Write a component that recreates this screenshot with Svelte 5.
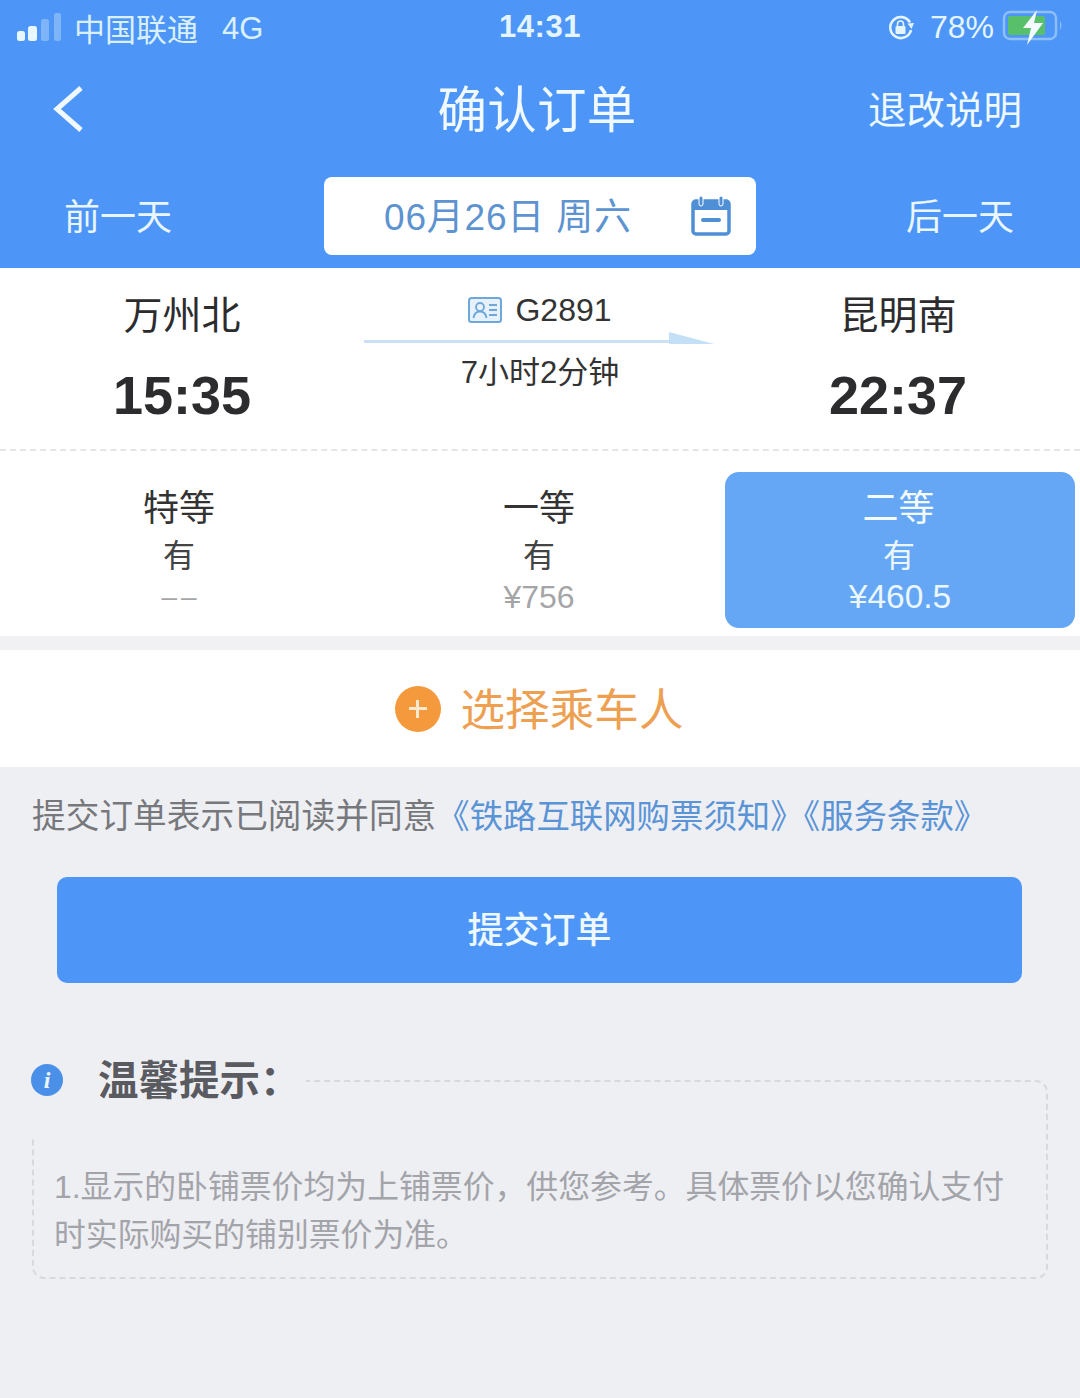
<script>
  const seats = [
    { name: '特等', left: '有', price: '––', empty: true },
    { name: '一等', left: '有', price: '¥756' },
    { name: '二等', left: '有', price: '¥460.5', active: true }
  ];
</script>

<div class="page">
  <header class="top">
    <div class="status">
      <div class="status-left">
        <svg class="signal" width="46" height="30" viewBox="0 0 46 30">
          <rect x="1" y="18" width="8" height="10" rx="2.5" fill="#e8f6ff" />
          <rect x="12" y="13" width="9" height="15" rx="2.5" fill="#e8f6ff" />
          <rect x="25" y="6" width="8" height="22" rx="2.5" fill="#7fb5f8" />
          <rect x="38" y="0" width="7" height="28" rx="2.5" fill="#7fb5f8" />
        </svg>
        <span class="carrier">中国联通</span>
        <span class="net">4G</span>
      </div>
      <span class="clock">14:31</span>
      <div class="status-right">
        <svg class="lock" width="30" height="30" viewBox="0 0 30 30">
          <path d="M24 9.5A10.5 10.5 0 1 0 25 17" fill="none" stroke="#e4f5ff" stroke-width="2.6" />
          <path d="M21.5 10.5 L28 10 L25.5 16 Z" fill="#e4f5ff" />
          <rect x="9.5" y="13" width="10" height="8" rx="1" fill="#e4f5ff" />
          <path d="M11.5 13v-2a3 3 0 0 1 6 0v2" fill="none" stroke="#e4f5ff" stroke-width="1.6" />
        </svg>
        <span class="pct">78%</span>
        <svg class="batt" width="62" height="44" viewBox="0 0 62 44">
          <rect x="2" y="9" width="52" height="27" rx="6" fill="none" stroke="#8ec0f7" stroke-width="2.4" />
          <rect x="6" y="13" width="37" height="19" rx="2" fill="#58c06a" />
          <path d="M58 18q3 4 0 9z" fill="#8ec0f7" />
          <path d="M35 7 L21 25 H29 L25 42 L41 20 H32 Z" fill="#f4fbff" />
        </svg>
      </div>
    </div>

    <nav class="nav">
      <svg class="back" width="32" height="48" viewBox="0 0 32 48">
        <path d="M29 3 L5 24 L29 45" fill="none" stroke="#f0f9ff" stroke-width="5" />
      </svg>
      <h1>确认订单</h1>
      <span class="refund">退改说明</span>
    </nav>

    <div class="dates">
      <span class="day-link prev">前一天</span>
      <div class="date-box">
        <span class="date-text">06月26日 周六</span>
        <svg class="cal" width="42" height="42" viewBox="0 0 42 42">
          <rect x="3" y="6" width="36" height="33" rx="3" fill="none" stroke="#4f8fd6" stroke-width="3.5" />
          <rect x="3" y="6" width="36" height="9" fill="#4f8fd6" />
          <rect x="9" y="1" width="4" height="10" rx="2" fill="#4f8fd6" stroke="#fff" stroke-width="1" />
          <rect x="29" y="1" width="4" height="10" rx="2" fill="#4f8fd6" stroke="#fff" stroke-width="1" />
          <rect x="11" y="23" width="20" height="4" rx="2" fill="#4f8fd6" />
        </svg>
      </div>
      <span class="day-link next">后一天</span>
    </div>
  </header>

  <section class="route">
    <div class="station">
      <span class="st-name">万州北</span>
      <span class="st-time">15:35</span>
    </div>
    <div class="train">
      <div class="train-no">
        <svg width="34" height="26" viewBox="0 0 34 26">
          <rect x="1" y="1" width="32" height="24" rx="2.5" fill="#e6f1fb" stroke="#6ea8da" stroke-width="2" />
          <circle cx="12" cy="10" r="4" fill="none" stroke="#6ea8da" stroke-width="1.8" />
          <path d="M5.5 21q1-6.5 6.5-6.5t6.5 6.5" fill="none" stroke="#6ea8da" stroke-width="1.8" />
          <path d="M21 8h8M21 13h8M21 18h8" stroke="#6ea8da" stroke-width="1.8" />
        </svg>
        <span>G2891</span>
      </div>
      <svg class="arrow" width="352" height="14" viewBox="0 0 352 14">
        <rect x="0" y="9" width="306" height="3" fill="#c9e0f5" />
        <path d="M305 1 L350 13 H305 Z" fill="#c4e0f6" />
      </svg>
      <span class="duration">7小时2分钟</span>
    </div>
    <div class="station">
      <span class="st-name">昆明南</span>
      <span class="st-time">22:37</span>
    </div>
  </section>

  <section class="seats">
    {#each seats as s}
      <div class="seat" class:active={s.active}>
        <span class="seat-name">{s.name}</span>
        <span class="seat-left">{s.left}</span>
        <span class="seat-price" class:empty={s.empty}>{s.price}</span>
      </div>
    {/each}
  </section>

  <section class="passenger">
    <span class="plus"></span>
    <span class="passenger-text">选择乘车人</span>
  </section>

  <p class="agree">提交订单表示已阅读并同意<span class="link">《铁路互联网购票须知》《服务条款》</span></p>

  <button class="submit"><span>提交订单</span></button>

  <section class="tips">
    <div class="tips-title">
      <span class="info">i</span>
      <span class="tips-label">温馨提示：</span>
    </div>
    <p>1.显示的卧铺票价均为上铺票价，供您参考。具体票价以您确认支付时实际购买的铺别票价为准。</p>
  </section>
</div>

<style>
  :global(body) {
    margin: 0;
    background: #eeeff3;
  }
  .page {
    width: 1080px;
    height: 1398px;
    overflow: hidden;
    background: #eeeff3;
    font-family: "Liberation Sans", "Noto Sans CJK SC", sans-serif;
  }
  .top {
    background: #4d96f7;
    height: 268px;
    color: #eef8ff;
  }
  .status {
    height: 54px;
    display: grid;
    grid-template-columns: 1fr auto 1fr;
    align-items: center;
    padding: 0 16px;
  }
  .status-left {
    display: flex;
    align-items: center;
  }
  .signal { margin-top: 1px; }
  .carrier {
    font-size: 31px;
    margin-left: 12px;
    color: #d9f0fb;
  }
  .net {
    font-size: 31px;
    margin-left: 24px;
    margin-top: 3px;
    color: #d9f0fb;
  }
  .clock {
    font-size: 31px;
    font-weight: 700;
    color: #e4f5ff;
    letter-spacing: 0.5px;
  }
  .status-right {
    display: flex;
    align-items: center;
    justify-content: flex-end;
  }
  .lock { margin-top: 2px; margin-right: 2px; }
  .pct {
    font-size: 32px;
    margin-left: 12px;
    margin-right: 8px;
    color: #e4f5ff;
  }
  .batt { margin-top: -4px; }
  .nav {
    height: 110px;
    display: grid;
    grid-template-columns: 1fr auto 1fr;
    align-items: center;
    padding: 0 58px 0 52px;
  }
  .back { display: block; }
  .nav h1 {
    margin: 0 0 6px;
    font-size: 49.5px;
    font-weight: 400;
    letter-spacing: 0.3px;
    color: #f0f9ff;
  }
  .refund {
    font-size: 38.5px;
    justify-self: end;
    margin-bottom: 4px;
  }
  .dates {
    height: 78px;
    display: grid;
    grid-template-columns: 1fr 432px 1fr;
    align-items: center;
    margin-top: 13px;
  }
  .day-link {
    font-size: 36px;
    color: #e9f6ff;
    margin-bottom: 4px;
  }
  .prev { padding-left: 64px; }
  .next {
    padding-right: 66px;
    text-align: right;
  }
  .date-box {
    height: 78px;
    background: #fff;
    border-radius: 8px;
    display: flex;
    align-items: center;
    padding: 0 24px 0 60px;
    justify-content: space-between;
    box-sizing: border-box;
  }
  .date-text {
    font-size: 37px;
    letter-spacing: 0.8px;
    color: #5c93d0;
    white-space: pre;
    margin-bottom: 4px;
  }
  .route {
    background: #fff;
    height: 181px;
    display: grid;
    grid-template-columns: 364px 352px 364px;
    border-bottom: 2px dashed #e4e5e8;
  }
  .station {
    display: flex;
    flex-direction: column;
    align-items: center;
    color: #2c2c2e;
    padding-top: 25px;
  }
  .st-name {
    font-size: 39px;
    line-height: 46px;
  }
  .st-time {
    font-size: 54px;
    line-height: 62px;
    margin-top: 25px;
    font-weight: 700;
  }
  .train {
    display: flex;
    flex-direction: column;
    align-items: center;
    padding-top: 24px;
    color: #333;
  }
  .train-no {
    display: flex;
    align-items: center;
    gap: 13px;
    font-size: 32px;
    line-height: 36px;
  }
  .arrow { margin-top: 3px; }
  .duration {
    font-size: 31px;
    line-height: 36px;
    margin-top: 10px;
  }
  .seats {
    background: #fff;
    height: 199px;
    display: grid;
    grid-template-columns: 358px 362px 355px;
    padding: 21px 5px 8px 0;
    box-sizing: border-box;
    border-bottom: 14px solid #f1f1f4;
  }
  .seat {
    display: flex;
    flex-direction: column;
    align-items: center;
    border-radius: 14px;
    color: #333;
    padding-top: 15px;
  }
  .seat-name {
    font-size: 36px;
    line-height: 44px;
  }
  .seat-left {
    font-size: 32px;
    line-height: 40px;
    margin-top: 5px;
    color: #444;
  }
  .seat-price {
    font-size: 32px;
    line-height: 40px;
    margin-top: 1px;
    color: #a5a5a8;
  }
  .seat-price.empty {
    font-size: 28px;
    letter-spacing: 4px;
    margin-right: -4px;
  }
  .seat.active {
    background: #65a6f5;
    color: #f3fbff;
    margin-left: 5px;
  }
  .seat.active .seat-name { margin-right: 3px; }
  .seat.active .seat-left,
  .seat.active .seat-price {
    color: #eaf7ff;
  }
  .seat.active .seat-left { margin-right: 2px; }
  .seat.active .seat-price { font-size: 33.5px; }
  .passenger {
    background: #fff;
    height: 117px;
    display: flex;
    align-items: center;
    justify-content: center;
    gap: 20px;
    padding-right: 2px;
  }
  .plus {
    width: 46px;
    height: 46px;
    border-radius: 50%;
    background: #f59a3c;
    position: relative;
  }
  .plus::before,
  .plus::after {
    content: "";
    position: absolute;
    background: #fbe9cf;
    left: 14px;
    top: 21.5px;
    width: 18px;
    height: 3px;
  }
  .plus::after {
    left: 21.5px;
    top: 14px;
    width: 3px;
    height: 18px;
  }
  .passenger-text {
    font-size: 44.6px;
    color: #eea052;
    padding-bottom: 4px;
  }
  .agree {
    margin: 29px 0 0 32px;
    font-size: 33.7px;
    line-height: 40px;
    color: #77787c;
    white-space: nowrap;
  }
  .link {
    color: #5a94d6;
    font-size: 33.4px;
  }
  .submit {
    display: block;
    width: 965px;
    height: 106px;
    margin: 40px 0 0 57px;
    padding: 0 0 6px;
    border: 0;
    border-radius: 10px;
    background: #4d96f7;
    color: #eef8ff;
    font: inherit;
    font-size: 36px;
    font-weight: 500;
  }
  .tips {
    position: relative;
    box-sizing: border-box;
    width: 1016px;
    height: 199px;
    margin: 97px 0 0 32px;
    border: 2px dashed #d8d9de;
    border-radius: 12px;
    padding: 81px 20px 0 20px;
  }
  .tips-title {
    position: absolute;
    left: -4px;
    top: -31px;
    width: 276px;
    height: 87px;
    background: #eeeff3;
    display: flex;
    align-items: flex-start;
    padding-top: 5px;
    box-sizing: border-box;
  }
  .info {
    width: 32px;
    height: 32px;
    margin-top: 8px;
    margin-left: 1px;
    border-radius: 50%;
    background: #4a90e8;
    color: #eaf5ff;
    font-family: "Liberation Serif", serif;
    font-style: italic;
    font-weight: 700;
    font-size: 24px;
    line-height: 32px;
    text-align: center;
  }
  .tips-label {
    margin-left: 35px;
    font-size: 40.5px;
    line-height: 50px;
    font-weight: 700;
    color: #5a5b60;
    white-space: nowrap;
  }
  .tips p {
    margin: 0;
    font-size: 31.85px;
    line-height: 48px;
    color: #a3a4a9;
  }
</style>
